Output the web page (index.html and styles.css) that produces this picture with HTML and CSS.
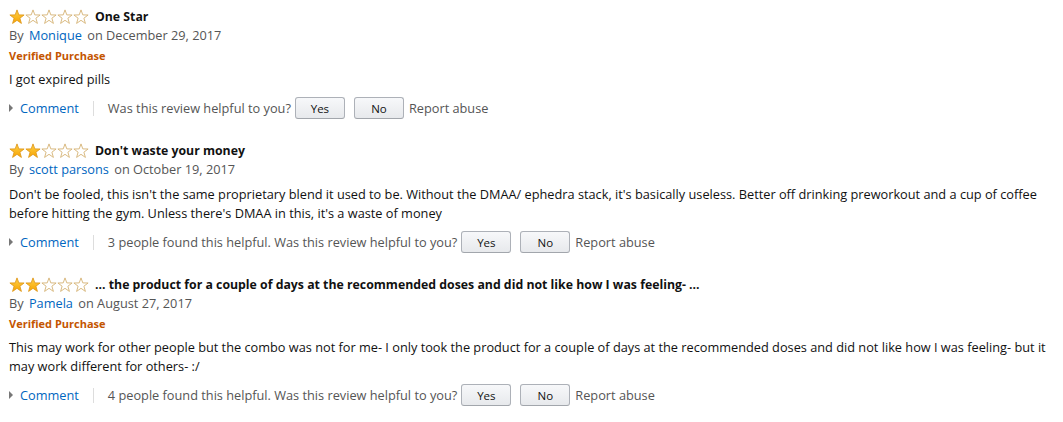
FILE: index.html
```html
<!DOCTYPE html>
<html lang="en">
<head>
    <meta charset="UTF-8">
    <meta name="viewport" content="width=device-width, initial-scale=1.0">
    <title>Customer Reviews</title>
    <link rel="stylesheet" href="styles.css">
</head>
<body>
    <svg class="defs" width="0" height="0">
        <defs>
            <linearGradient id="gold" x1="0" y1="0" x2="0" y2="1">
                <stop offset="0" stop-color="#ffd24a"/>
                <stop offset="1" stop-color="#f7a300"/>
            </linearGradient>
            <symbol id="star" viewBox="0 0 16 16">
                <polygon points="8,0.9 9.8,5.9 15.1,6 10.9,9.2 12.4,14.4 8,11.3 3.6,14.4 5.1,9.2 0.9,6 6.2,5.9"/>
            </symbol>
        </defs>
    </svg>

    <div class="reviews">

        <div class="review">
            <div class="review-title">
                <span class="stars">
                    <svg class="star full"><use href="#star"/></svg>
                    <svg class="star"><use href="#star"/></svg>
                    <svg class="star"><use href="#star"/></svg>
                    <svg class="star"><use href="#star"/></svg>
                    <svg class="star"><use href="#star"/></svg>
                </span>
                <span class="title-text">One Star</span>
            </div>
            <div class="byline">By <a href="#" class="author">Monique</a> on December 29, 2017</div>
            <div class="verified">Verified Purchase</div>
            <div class="review-body">I got expired pills</div>
            <div class="actions">
                <a href="#" class="comment"><span class="arrow"></span>Comment</a>
                <span class="divider"></span>
                <span class="helpful">Was this review helpful to you?</span>
                <button class="vote">Yes</button>
                <button class="vote">No</button>
                <a href="#" class="report">Report abuse</a>
            </div>
        </div>

        <div class="review">
            <div class="review-title">
                <span class="stars">
                    <svg class="star full"><use href="#star"/></svg>
                    <svg class="star full"><use href="#star"/></svg>
                    <svg class="star"><use href="#star"/></svg>
                    <svg class="star"><use href="#star"/></svg>
                    <svg class="star"><use href="#star"/></svg>
                </span>
                <span class="title-text">Don't waste your money</span>
            </div>
            <div class="byline">By <a href="#" class="author">scott parsons</a> on October 19, 2017</div>
            <div class="review-body">Don't be fooled, this isn't the same proprietary blend it used to be. Without the DMAA/ ephedra stack, it's basically useless. Better off drinking preworkout and a cup of coffee before hitting the gym. Unless there's DMAA in this, it's a waste of money</div>
            <div class="actions">
                <a href="#" class="comment"><span class="arrow"></span>Comment</a>
                <span class="divider"></span>
                <span class="helpful">3 people found this helpful. Was this review helpful to you?</span>
                <button class="vote">Yes</button>
                <button class="vote">No</button>
                <a href="#" class="report">Report abuse</a>
            </div>
        </div>

        <div class="review">
            <div class="review-title">
                <span class="stars">
                    <svg class="star full"><use href="#star"/></svg>
                    <svg class="star full"><use href="#star"/></svg>
                    <svg class="star"><use href="#star"/></svg>
                    <svg class="star"><use href="#star"/></svg>
                    <svg class="star"><use href="#star"/></svg>
                </span>
                <span class="title-text">... the product for a couple of days at the recommended doses and did not like how I was feeling- ...</span>
            </div>
            <div class="byline">By <a href="#" class="author">Pamela</a> on August 27, 2017</div>
            <div class="verified">Verified Purchase</div>
            <div class="review-body">This may work for other people but the combo was not for me- I only took the product for a couple of days at the recommended doses and did not like how I was feeling- but it may work different for others- :/</div>
            <div class="actions">
                <a href="#" class="comment"><span class="arrow"></span>Comment</a>
                <span class="divider"></span>
                <span class="helpful">4 people found this helpful. Was this review helpful to you?</span>
                <button class="vote">Yes</button>
                <button class="vote">No</button>
                <a href="#" class="report">Report abuse</a>
            </div>
        </div>

    </div>
</body>
</html>
```

FILE: styles.css
```css
body {
    margin: 0;
    font-family: "Open Sans", "Liberation Sans", Arial, sans-serif;
    font-size: 12.75px;
    line-height: 19px;
    color: #111;
    background: #fff;
}
a {
    color: #0066c0;
    text-decoration: none;
}
.defs {
    position: absolute;
}
.reviews {
    padding: 7px 4px 0 9px;
}
.review {
    margin-bottom: 22px;
}
.review-title {
    display: flex;
    align-items: center;
    height: 19px;
}
.stars {
    display: flex;
    margin-right: 6px;
}
.star {
    width: 16px;
    height: 16px;
    fill: #fff;
    stroke: #d5b274;
    stroke-width: 0.9;
}
.star.full {
    fill: url(#gold);
    stroke: #e09a1c;
}
.title-text {
    font-size: 12.3px;
    font-weight: bold;
}
.byline {
    color: #555;
}
.author {
    margin: 0 2px;
}
.verified {
    margin: 1px 0 -1px;
    font-size: 11px;
    font-weight: bold;
    color: #c45500;
}
.review-body {
    margin-top: 6px;
}
.actions {
    display: flex;
    align-items: center;
    height: 22px;
    margin-top: 8px;
    color: #555;
}
.comment {
    display: flex;
    align-items: center;
}
.arrow {
    width: 0;
    height: 0;
    margin-right: 7px;
    border-top: 4px solid transparent;
    border-bottom: 4px solid transparent;
    border-left: 4px solid #777;
}
.divider {
    width: 1px;
    height: 15px;
    margin: 0 14px;
    background: #ddd;
}
.vote {
    width: 50px;
    height: 22px;
    margin-left: 9px;
    padding: 0;
    font-family: inherit;
    font-size: 11.5px;
    color: #111;
    background: linear-gradient(#f7f8fa, #e7e9ec);
    border: 1px solid #adb1b8;
    border-bottom-color: #a2a6ac;
    border-radius: 3px;
    cursor: pointer;
}
.vote:first-of-type {
    margin-left: 4px;
}
.report {
    margin-left: 5px;
    color: #555;
}
```
